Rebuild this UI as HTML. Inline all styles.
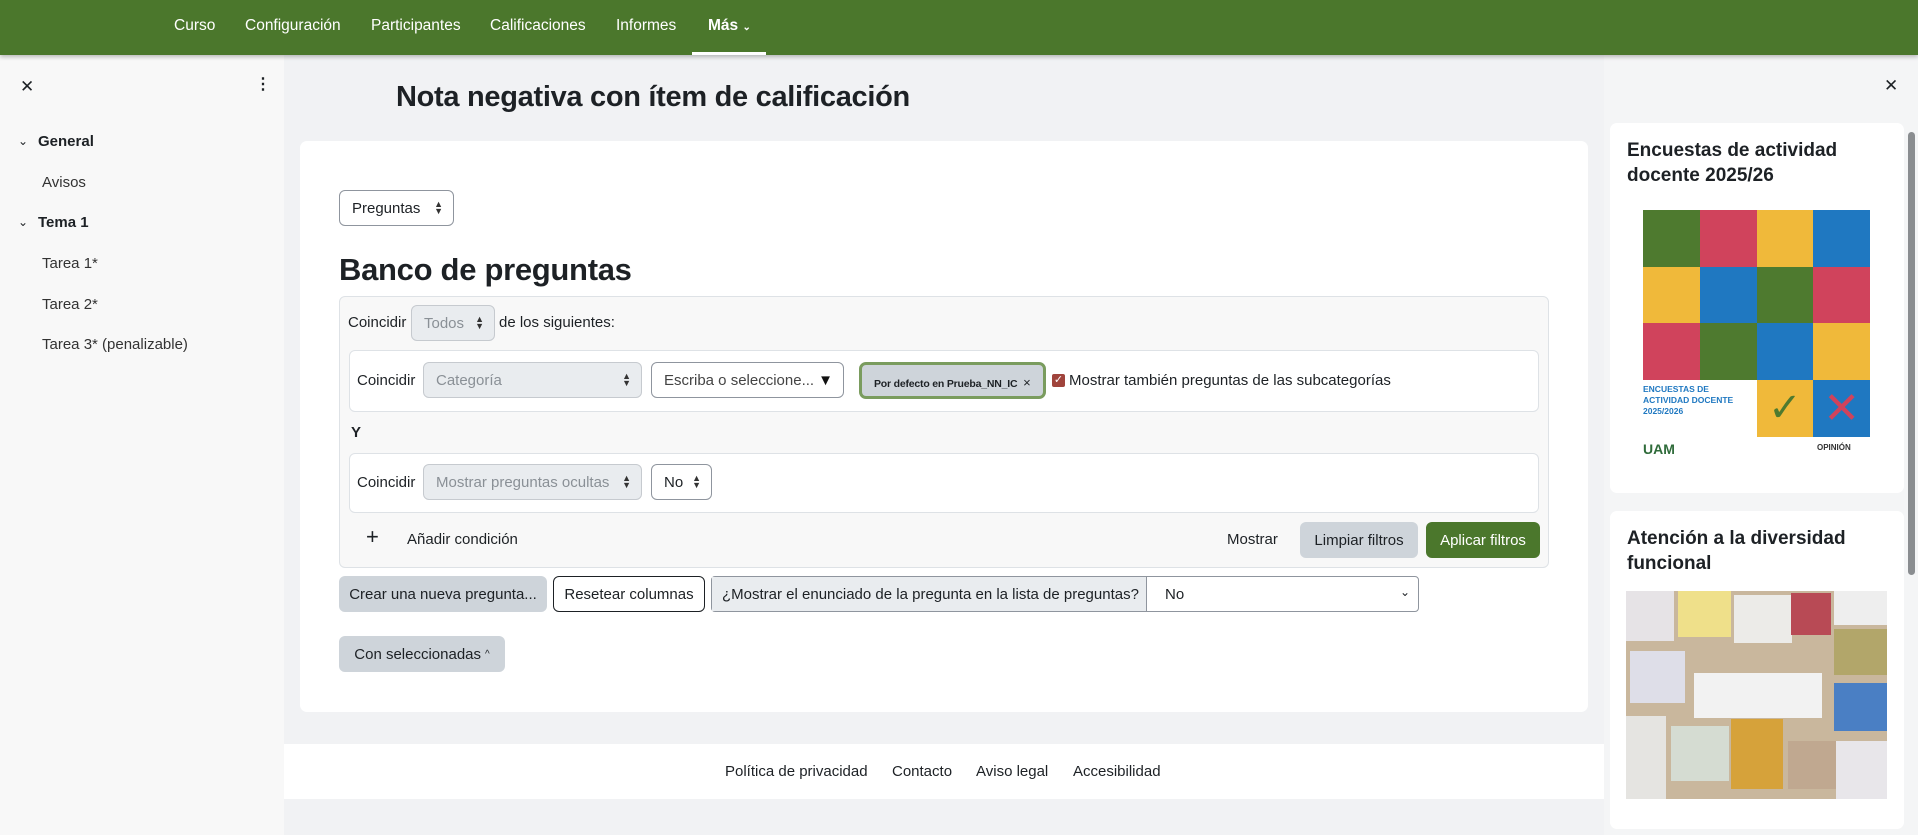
<!DOCTYPE html>
<html><head><meta charset="utf-8"><style>
*{box-sizing:border-box;margin:0;padding:0}
body{width:1918px;height:835px;overflow:hidden;background:#f1f2f4;font-family:"Liberation Sans",Arial,sans-serif;color:#1d2125;position:relative;font-size:15px}
.a{position:absolute;white-space:nowrap}
.nav{left:0;top:0;width:1918px;height:55px;background:#4b772c;box-shadow:0 2px 4px rgba(0,0,0,.25);z-index:3}
.nav span{position:absolute;top:17px;color:#fff;font-size:15.5px}
.drawer{left:0;top:55px;width:284px;height:780px;background:#f8f8f8}
.rd{left:1604px;top:55px;width:314px;height:780px;background:#f4f5f6}
.card{background:#fff;border-radius:7px}
.sel{position:absolute;border:1px solid #8f959e;border-radius:6px;background:#fff;font-size:15px;padding-left:12px;display:flex;align-items:center}
.sel.dis{background:#e9ecef;color:#8a9096;border-color:#c6cacf}
.sel .ar{position:absolute;right:10px;top:50%;margin-top:-7px;font-size:9px;line-height:7px;color:#333}
.btn{position:absolute;border-radius:6px;display:flex;align-items:center;justify-content:center;font-size:15px}
.g{background:#ced4da;color:#1d2125}
</style></head><body>
<div class="a nav">
<span style="left:174px">Curso</span>
<span style="left:245px">Configuración</span>
<span style="left:371px">Participantes</span>
<span style="left:490px">Calificaciones</span>
<span style="left:616px">Informes</span>
<span style="left:708px;font-weight:bold">Más <small style="font-size:10px">⌄</small></span>
<div style="position:absolute;left:692px;top:52px;width:74px;height:3px;background:#fff"></div>
</div>
<div class="a drawer">
<span class="a" style="left:20px;top:22px;font-size:17px">✕</span>
<span class="a" style="left:255px;top:19px;font-size:16px;font-weight:bold">⋮</span>
<span class="a" style="left:18px;top:79px;font-size:12px">⌄</span>
<span class="a" style="left:38px;top:78px;font-weight:bold">General</span>
<span class="a" style="left:42px;top:119px;color:#333">Avisos</span>
<span class="a" style="left:18px;top:160px;font-size:12px">⌄</span>
<span class="a" style="left:38px;top:159px;font-weight:bold">Tema 1</span>
<span class="a" style="left:42px;top:200px;color:#333">Tarea 1*</span>
<span class="a" style="left:42px;top:241px;color:#333">Tarea 2*</span>
<span class="a" style="left:42px;top:281px;color:#333">Tarea 3* (penalizable)</span>
</div>
<div class="a" style="left:396px;top:81px;font-size:29px;font-weight:bold;letter-spacing:-.3px">Nota negativa con ítem de calificación</div>
<div class="a card" style="left:300px;top:141px;width:1288px;height:571px"></div>
<div class="sel" style="left:339px;top:190px;width:115px;height:36px">Preguntas<span class="ar">▲<br>▼</span></div>
<div class="a" style="left:339px;top:252px;font-size:31px;font-weight:bold;letter-spacing:-.3px">Banco de preguntas</div>
<div class="a" style="left:339px;top:296px;width:1210px;height:272px;background:#f8f8f8;border:1px solid #dee2e6;border-radius:6px"></div>
<span class="a" style="left:348px;top:314px">Coincidir</span>
<div class="sel dis" style="left:411px;top:305px;width:84px;height:36px">Todos<span class="ar">▲<br>▼</span></div>
<span class="a" style="left:499px;top:314px">de los siguientes:</span>
<div class="a" style="left:349px;top:350px;width:1190px;height:62px;background:#fff;border:1px solid #dee2e6;border-radius:6px"></div>
<span class="a" style="left:357px;top:372px">Coincidir</span>
<div class="sel dis" style="left:423px;top:362px;width:219px;height:36px">Categoría<span class="ar">▲<br>▼</span></div>
<div class="sel" style="left:651px;top:362px;width:193px;height:36px;color:#444">Escriba o seleccione...<span style="position:absolute;right:10px;color:#111">▼</span></div>
<div class="a" style="left:859px;top:362px;width:187px;height:37px;background:#ced4da;border:3px solid #7a9c5e;border-radius:7px;font-size:10.5px;font-weight:bold;padding:10px 0 0 12px;letter-spacing:-.2px">Por defecto en Prueba_NN_IC <span style="font-weight:normal;font-size:13px;margin-left:3px">×</span></div>
<div class="a" style="left:1052px;top:374px;width:13px;height:13px;background:#a0443c;border-radius:2px;color:#fff;font-size:11px;line-height:13px;text-align:center">✓</div>
<span class="a" style="left:1069px;top:372px">Mostrar también preguntas de las subcategorías</span>
<span class="a" style="left:351px;top:424px;font-weight:bold">Y</span>
<div class="a" style="left:349px;top:453px;width:1190px;height:60px;background:#fff;border:1px solid #dee2e6;border-radius:6px"></div>
<span class="a" style="left:357px;top:474px">Coincidir</span>
<div class="sel dis" style="left:423px;top:464px;width:219px;height:36px">Mostrar preguntas ocultas<span class="ar">▲<br>▼</span></div>
<div class="sel" style="left:651px;top:464px;width:61px;height:36px">No<span class="ar">▲<br>▼</span></div>
<span class="a" style="left:366px;top:526px;font-size:22px;line-height:22px">+</span>
<span class="a" style="left:407px;top:531px">Añadir condición</span>
<span class="a" style="left:1227px;top:531px">Mostrar</span>
<div class="btn g" style="left:1300px;top:522px;width:118px;height:36px">Limpiar filtros</div>
<div class="btn" style="left:1426px;top:522px;width:114px;height:36px;background:#4b772c;color:#fff">Aplicar filtros</div>
<div class="btn g" style="left:339px;top:576px;width:208px;height:36px">Crear una nueva pregunta...</div>
<div class="btn" style="left:553px;top:576px;width:152px;height:36px;border:1px solid #1d2125;background:#fff">Resetear columnas</div>
<div class="a" style="left:711px;top:576px;width:708px;height:36px;border:1px solid #8f959e;border-radius:4px;background:#fff">
<div style="position:absolute;left:0;top:0;width:435px;height:34px;background:#e9ecef;border-right:1px solid #8f959e;padding:9px 0 0 10px">¿Mostrar el enunciado de la pregunta en la lista de preguntas?</div>
<span style="position:absolute;left:453px;top:9px">No</span><span style="position:absolute;right:8px;top:8px;font-size:12px">⌄</span></div>
<div class="btn g" style="left:339px;top:636px;width:166px;height:36px">Con seleccionadas <small style="font-size:10px;margin-left:4px">^</small></div>
<div class="a" style="left:284px;top:744px;width:1320px;height:55px;background:#fff"></div>
<span class="a" style="left:725px;top:763px">Política de privacidad</span>
<span class="a" style="left:892px;top:763px">Contacto</span>
<span class="a" style="left:976px;top:763px">Aviso legal</span>
<span class="a" style="left:1073px;top:763px">Accesibilidad</span>
<div class="a rd"></div>
<span class="a" style="left:1884px;top:76px;font-size:17px">✕</span>
<div class="a card" style="left:1610px;top:123px;width:294px;height:370px"></div>
<div class="a" style="left:1627px;top:138px;font-size:19px;font-weight:bold;line-height:25px">Encuestas de actividad<br>docente 2025/26</div>
<div class="a" style="left:1643px;top:210px;width:227px;height:227px;display:grid;grid-template-columns:repeat(4,1fr);grid-template-rows:repeat(4,1fr)">
<div style="background:#4e7a2f"></div><div style="background:#d0435c"></div><div style="background:#f0b93a"></div><div style="background:#1f78c1"></div>
<div style="background:#f0b93a"></div><div style="background:#1f78c1"></div><div style="background:#4e7a2f"></div><div style="background:#d0435c"></div>
<div style="background:#d0435c"></div><div style="background:#4e7a2f"></div><div style="background:#1f78c1"></div><div style="background:#f0b93a"></div>
<div style="background:#fff;grid-column:span 2;color:#1f78c1;font-size:8.5px;font-weight:bold;line-height:11px;padding-top:4px">ENCUESTAS DE<br>ACTIVIDAD DOCENTE<br>2025/2026</div><div style="background:#f0b93a;color:#4e7a2f;font-size:40px;text-align:center;line-height:57px">✓</div><div style="background:#1f78c1;color:#d0435c;font-size:44px;text-align:center;line-height:57px">✕</div>
</div>
<span class="a" style="left:1643px;top:441px;color:#2f6b3a;font-weight:bold;font-size:14px">UAM</span>
<span class="a" style="left:1817px;top:443px;color:#333;font-weight:bold;font-size:8px">OPINIÓN</span>
<div class="a card" style="left:1610px;top:511px;width:294px;height:318px"></div>
<div class="a" style="left:1627px;top:526px;font-size:19px;font-weight:bold;line-height:25px">Atención a la diversidad<br>funcional</div>
<div class="a" style="left:1626px;top:591px;width:261px;height:208px;background:#c9b79d;overflow:hidden">
<div style="position:absolute;left:0;top:0;width:48px;height:50px;background:#e6e3e6"></div>
<div style="position:absolute;left:52px;top:0;width:53px;height:46px;background:#efe08a"></div>
<div style="position:absolute;left:108px;top:4px;width:58px;height:48px;background:#ecebe8"></div>
<div style="position:absolute;left:165px;top:2px;width:40px;height:42px;background:#b84a55"></div>
<div style="position:absolute;left:208px;top:0;width:53px;height:34px;background:#eee"></div>
<div style="position:absolute;left:208px;top:38px;width:53px;height:46px;background:#b2a66a"></div>
<div style="position:absolute;left:4px;top:60px;width:55px;height:52px;background:#dedee8"></div>
<div style="position:absolute;left:68px;top:82px;width:128px;height:45px;background:#f2f2f2"></div>
<div style="position:absolute;left:208px;top:92px;width:53px;height:48px;background:#4a7fc4"></div>
<div style="position:absolute;left:0;top:125px;width:40px;height:83px;background:#e5e4e1"></div>
<div style="position:absolute;left:45px;top:135px;width:58px;height:55px;background:#d5dcd2"></div>
<div style="position:absolute;left:105px;top:128px;width:52px;height:70px;background:#d6a23a"></div>
<div style="position:absolute;left:162px;top:150px;width:48px;height:48px;background:#c0a890"></div>
<div style="position:absolute;left:210px;top:150px;width:51px;height:58px;background:#e8e6ea"></div>
</div>
<div class="a" style="left:1908px;top:132px;width:7px;height:443px;background:#8a8d90;border-radius:4px"></div>
</body></html>
